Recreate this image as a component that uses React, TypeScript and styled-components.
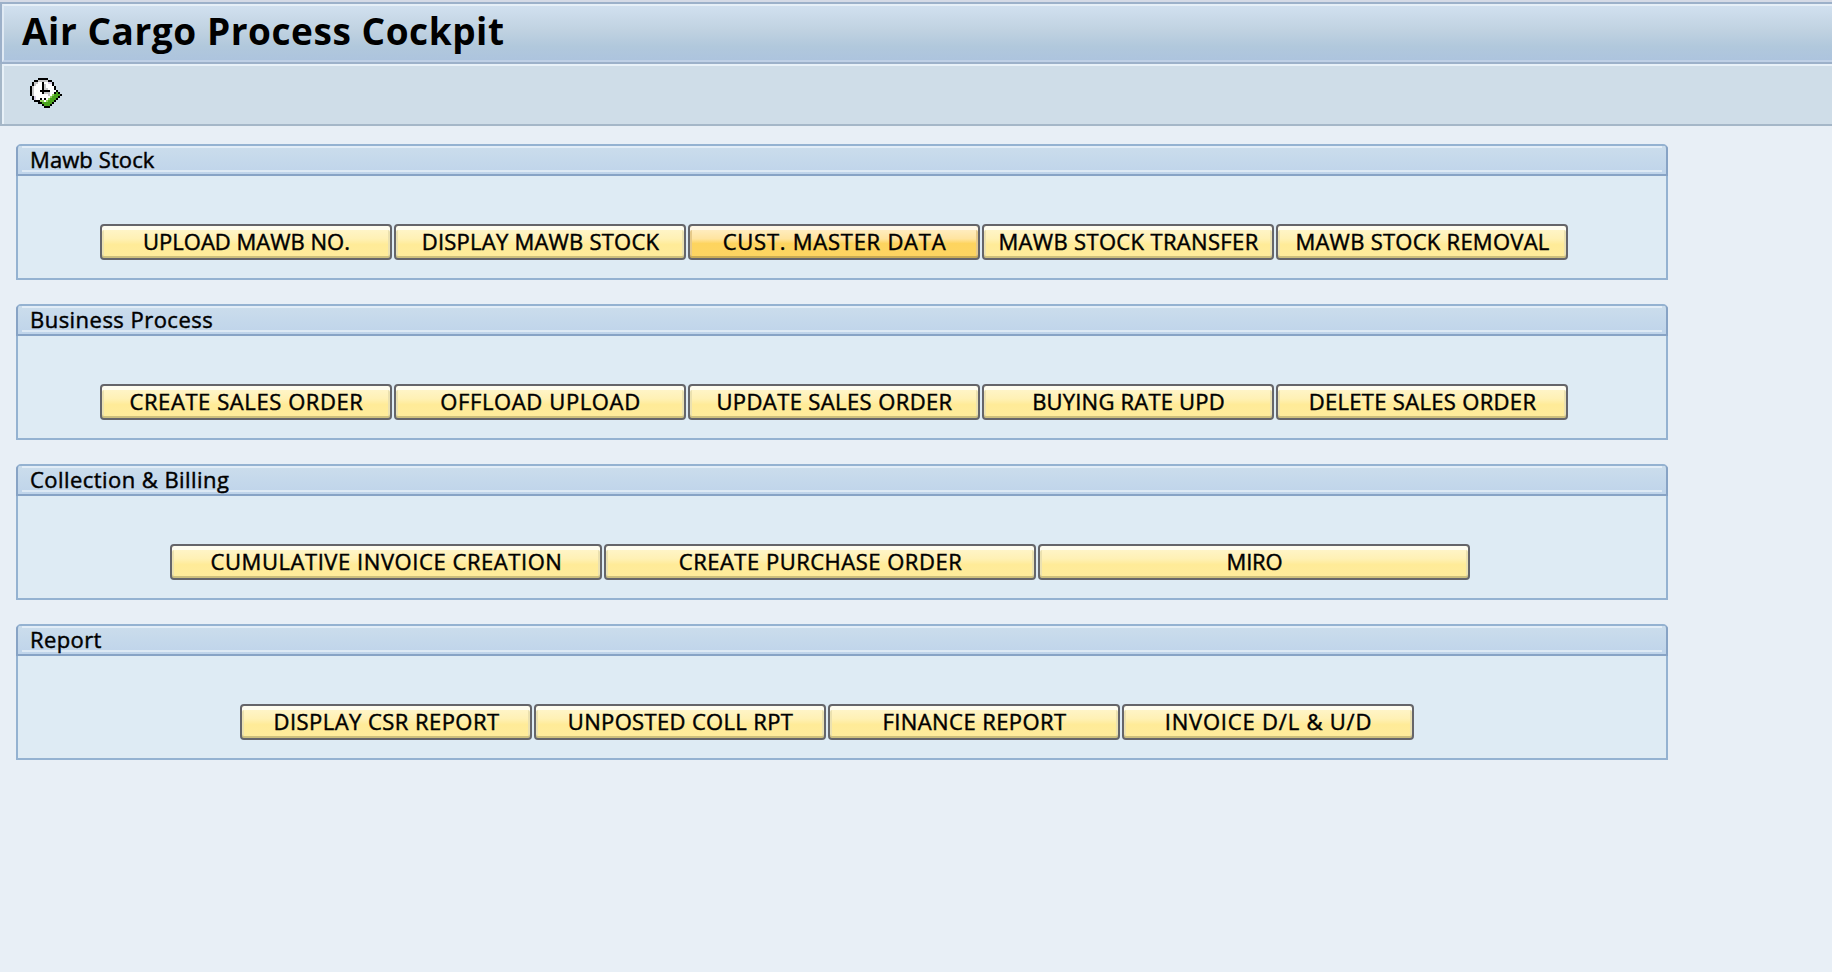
import React from "react";
import styled, { createGlobalStyle } from "styled-components";

const GlobalStyle = createGlobalStyle`
  html, body { margin: 0; padding: 0; background: #e8eff6; }
  body { font-family: "Open Sans", "Noto Sans", sans-serif; color: #000; }
  *, *::before, *::after { box-sizing: border-box; }
`;

const Screen = styled.div`
  min-height: 972px;
  overflow: hidden;
  background: #e8eff6;
`;

const TitleBar = styled.header`
  height: 64px;
  border-top: 2px solid #d5dae6;
  background: #9cb0c9;
  padding: 2px 0 2px 2px;
`;

const TitleFill = styled.div`
  height: 58px;
  padding-left: 18px;
  border-top: 2px solid #e6eff7;
  border-left: 2px solid #e0eaf4;
  border-bottom: 2px solid #bfd0e6;
  background: linear-gradient(#d1e0ef, #c0d2e1 45%, #b1c8dc 75%, #adc4de);
`;

const Title = styled.h1<{ $track: number }>`
  margin: 0;
  font-size: 37px;
  line-height: 50px;
  font-weight: 700;
  white-space: nowrap;
  width: max-content;
  letter-spacing: ${(p) => p.$track}px;
`;

const Toolbar = styled.div`
  height: 62px;
  border-left: 2px solid #a5b7c8;
  border-bottom: 2px solid #a5b7c8;
  background: #cfdde8;
  box-shadow: inset 2px 2px 0 #e8f1f8;
  padding: 14px 0 0 28px;
`;

const IconButton = styled.button`
  display: block;
  padding: 0;
  border: 0;
  background: none;
`;

const PixelIcon = styled.svg`
  display: block;
`;

const Groups = styled.main`
  display: flex;
  flex-direction: column;
  gap: 24px;
  padding: 18px 0 0 16px;
`;

const Group = styled.section`
  width: 1652px;
  height: 136px;
  border: 2px solid #94b2d1;
  border-radius: 5px 5px 0 0;
  background: #deebf4;
`;

const GroupTitle = styled.h2`
  margin: 0 -2px;
  height: 30px;
  padding: 0 2px 0 12px;
  border: solid #87a3c5;
  border-width: 0 2px 2px;
  border-radius: 3px 3px 0 0;
  background:
    linear-gradient(#e2edf7, #e2edf7) 4px 0 / calc(100% - 8px) 2px no-repeat,
    linear-gradient(#dde9f4, #dde9f4) 4px 24px / calc(100% - 8px) 2px no-repeat,
    linear-gradient(#cbddec, #bfd4ea);
  font-weight: 400;
`;

const Caption = styled.span<{ $track: number }>`
  display: block;
  width: max-content;
  font-size: 22px;
  line-height: 26px;
  -webkit-text-stroke: 0.45px #000;
  letter-spacing: ${(p) => p.$track}px;
`;

const ButtonRow = styled.div<{ $indent: number }>`
  display: flex;
  gap: 2px;
  padding: 48px 0 0 ${(p) => p.$indent}px;
`;

const ActionButton = styled.button<{ $width: number; $hot?: boolean }>`
  display: flex;
  justify-content: center;
  align-items: flex-start;
  width: ${(p) => p.$width}px;
  height: 36px;
  padding: 0 0 0 1px;
  border: 2px solid #65656a;
  border-radius: 4px;
  box-shadow:
    inset 0 -2px 0 ${(p) => (p.$hot ? "#c9ab54" : "#cdbf7d")},
    inset 0 4px 0 ${(p) => (p.$hot ? "#fff7e6" : "#fffdf0")},
    inset 2px 0 0 ${(p) => (p.$hot ? "#e5c98a" : "#ebe1b0")},
    inset -2px 0 0 ${(p) => (p.$hot ? "#e5c98a" : "#ebe1b0")};
  background: ${(p) =>
    p.$hot
      ? "linear-gradient(#fff0cc, #ffe4a0 40%, #fdd45e 55%, #fdd563)"
      : "linear-gradient(#fff6cf, #fff1b5 40%, #ffeb98 58%, #ffec9c)"};
  font-family: inherit;
  color: #000;
`;

const Label = styled.span<{ $track: number }>`
  font-size: 22px;
  line-height: 30px;
  white-space: nowrap;
  -webkit-text-stroke: 0.45px #000;
  letter-spacing: ${(p) => p.$track}px;
`;

type Action = { label: string; track: number; hot?: boolean };
type GroupData = { title: string; track: number; indent: number; width: number; actions: Action[] };

const groups: GroupData[] = [
  {
    title: "Mawb Stock", track: 0.1, indent: 82, width: 292,
    actions: [
      { label: "UPLOAD MAWB NO.", track: 0 },
      { label: "DISPLAY MAWB STOCK", track: 0.23 },
      { label: "CUST. MASTER DATA", track: 0.75, hot: true },
      { label: "MAWB STOCK TRANSFER", track: 0.34 },
      { label: "MAWB STOCK REMOVAL", track: 0.26 },
    ],
  },
  {
    title: "Business Process", track: 0.47, indent: 82, width: 292,
    actions: [
      { label: "CREATE SALES ORDER", track: 0.58 },
      { label: "OFFLOAD UPLOAD", track: 0.62 },
      { label: "UPDATE SALES ORDER", track: 0.39 },
      { label: "BUYING RATE UPD", track: 0.2 },
      { label: "DELETE SALES ORDER", track: 0.32 },
    ],
  },
  {
    title: "Collection & Billing", track: 0.44, indent: 152, width: 432,
    actions: [
      { label: "CUMULATIVE INVOICE CREATION", track: 0.56 },
      { label: "CREATE PURCHASE ORDER", track: 0.5 },
      { label: "MIRO", track: -0.2 },
    ],
  },
  {
    title: "Report", track: 0.4, indent: 222, width: 292,
    actions: [
      { label: "DISPLAY CSR REPORT", track: 0.45 },
      { label: "UNPOSTED COLL RPT", track: 0.34 },
      { label: "FINANCE REPORT", track: 0.42 },
      { label: "INVOICE D/L & U/D", track: 0.8 },
    ],
  },
];

/* Clock with a green check mark, one character per icon pixel. */
const clock = [
  "....KKKKK.......",
  "..KKGGGGGKK.....",
  ".KGGWWKWWLLK....",
  ".KGWWWKGWWWK....",
  "KGWWWWKGWWWWK...",
  "KGWWWWKGGWWWK...",
  "KGWWWKKKKKWWWK..",
  "KGWWWWKGGGWWKgK.",
  "KGWWWWWWWGWlgggK",
  ".KLWWWWWWWlgggK.",
  ".KLWWKWKWlgggK..",
  "..KKKllWlgggK...",
  "....KKgggggK....",
  "......KgggK.....",
  ".......KKK......",
];
const ink: Record<string, string> = {
  K: "#000", G: "#c8c8ca", W: "#fff", L: "#d9d0e8", l: "#8fd05a", g: "#49a31c",
};

const ClockIcon = () => (
  <PixelIcon width="32" height="30" viewBox="0 0 16 15" shapeRendering="crispEdges">
    {clock.flatMap((row, y) =>
      [...row].map((c, x) => (ink[c] ? <rect key={`${x}-${y}`} x={x} y={y} width="1" height="1" fill={ink[c]} /> : null)),
    )}
  </PixelIcon>
);

export default function App() {
  return (
    <Screen>
      <GlobalStyle />
      <TitleBar>
        <TitleFill>
          <Title $track={0.55}>Air Cargo Process Cockpit</Title>
        </TitleFill>
      </TitleBar>
      <Toolbar>
        <IconButton aria-label="Execute"><ClockIcon /></IconButton>
      </Toolbar>
      <Groups>
        {groups.map((g) => (
          <Group key={g.title}>
            <GroupTitle><Caption $track={g.track}>{g.title}</Caption></GroupTitle>
            <ButtonRow $indent={g.indent}>
              {g.actions.map((a) => (
                <ActionButton key={a.label} $width={g.width} $hot={a.hot}>
                  <Label $track={a.track}>{a.label}</Label>
                </ActionButton>
              ))}
            </ButtonRow>
          </Group>
        ))}
      </Groups>
    </Screen>
  );
}
